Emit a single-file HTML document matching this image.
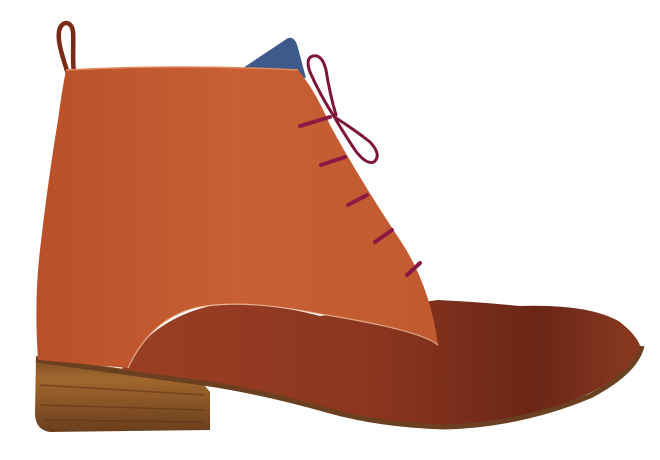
<!DOCTYPE html>
<html><head><style>html,body{margin:0;padding:0;background:#fff;width:660px;height:460px;overflow:hidden}</style></head>
<body>
<svg width="660" height="460" viewBox="0 0 660 460" xmlns="http://www.w3.org/2000/svg">
<defs>
<linearGradient id="sh" x1="0" y1="0" x2="1" y2="0">
<stop offset="0" stop-color="#b9502a"/><stop offset="0.5" stop-color="#c95f34"/><stop offset="1" stop-color="#c15a30"/>
</linearGradient>
<linearGradient id="vp" x1="0" y1="0" x2="1" y2="0">
<stop offset="0" stop-color="#9a3f22"/><stop offset="0.5" stop-color="#8a3520"/><stop offset="0.8" stop-color="#6a2616"/><stop offset="1" stop-color="#8a3a22"/>
</linearGradient>
<linearGradient id="wd" x1="0" y1="0" x2="0" y2="1">
<stop offset="0" stop-color="#7a4a22"/><stop offset="0.3" stop-color="#a0682e"/><stop offset="0.6" stop-color="#8a5526"/><stop offset="1" stop-color="#6a3e1c"/>
</linearGradient>
</defs>
<!-- pull loop -->
<path d="M68 74 C62 55 56 38 60 28 C64 20 72 22 73 32 C74 45 72 60 74 72" fill="none" stroke="#7a2a18" stroke-width="4.5"/>
<!-- tongue -->
<path d="M243 68 L288 38 Q295 36 298 48 L306 78 Z" fill="#3e5a8a"/>
<!-- heel -->
<path d="M36 356 L200 380 L210 392 L210 430 L50 432 Q36 430 35 415 Z" fill="url(#wd)"/>
<path d="M40 385 L205 395 M40 405 L205 410 M45 420 L205 422" stroke="#5a3418" stroke-width="1.5" opacity="0.6"/>
<!-- vamp -->
<path d="M120 372 Q150 320 210 306 Q260 300 320 316 L438 300 Q480 302 520 306 Q590 304 620 322 Q640 338 641 350 Q620 385 560 405 Q500 425 440 425 Q380 422 330 410 Q250 386 180 378 Z" fill="url(#vp)"/>
<!-- sole edge -->
<path d="M36 360 L180 380 Q250 388 330 411 Q380 425 445 427 Q520 425 590 396 Q636 372 642 346" fill="none" stroke="#6a4020" stroke-width="5"/>
<!-- shaft -->
<path d="M66 70 Q180 64 298 70 Q315 90 330 125 Q360 180 400 240 Q430 285 438 345 Q420 330 320 314 Q240 298 195 308 Q150 320 128 368 L38 360 Q34 300 40 250 Q48 180 58 120 Q62 90 66 70 Z" fill="url(#sh)"/>
<path d="M128 368 Q150 320 195 308 Q240 298 320 314 Q420 330 438 345" fill="none" stroke="#f0c0a0" stroke-width="1.2" opacity="0.8"/>
<path d="M66 70 Q180 64 298 70" fill="none" stroke="#e08a60" stroke-width="1.5"/>
<!-- laces -->
<g stroke="#8a1a44" stroke-width="4" stroke-linecap="round" fill="none">
<path d="M300 126 L330 117"/><path d="M321 165 L345 157"/><path d="M348 205 L367 195"/><path d="M375 242 L392 230"/><path d="M407 275 L420 263"/>
</g>
<g stroke="#7e1538" stroke-width="3" fill="none" stroke-linecap="round">
<path d="M335 118 Q320 95 310 72 Q305 58 313 56 Q322 54 326 70 Q330 95 336 115"/>
<path d="M336 118 Q355 130 370 142 Q382 155 374 162 Q366 165 355 150 Q345 135 336 120"/>
</g>
</svg>
</body></html>
